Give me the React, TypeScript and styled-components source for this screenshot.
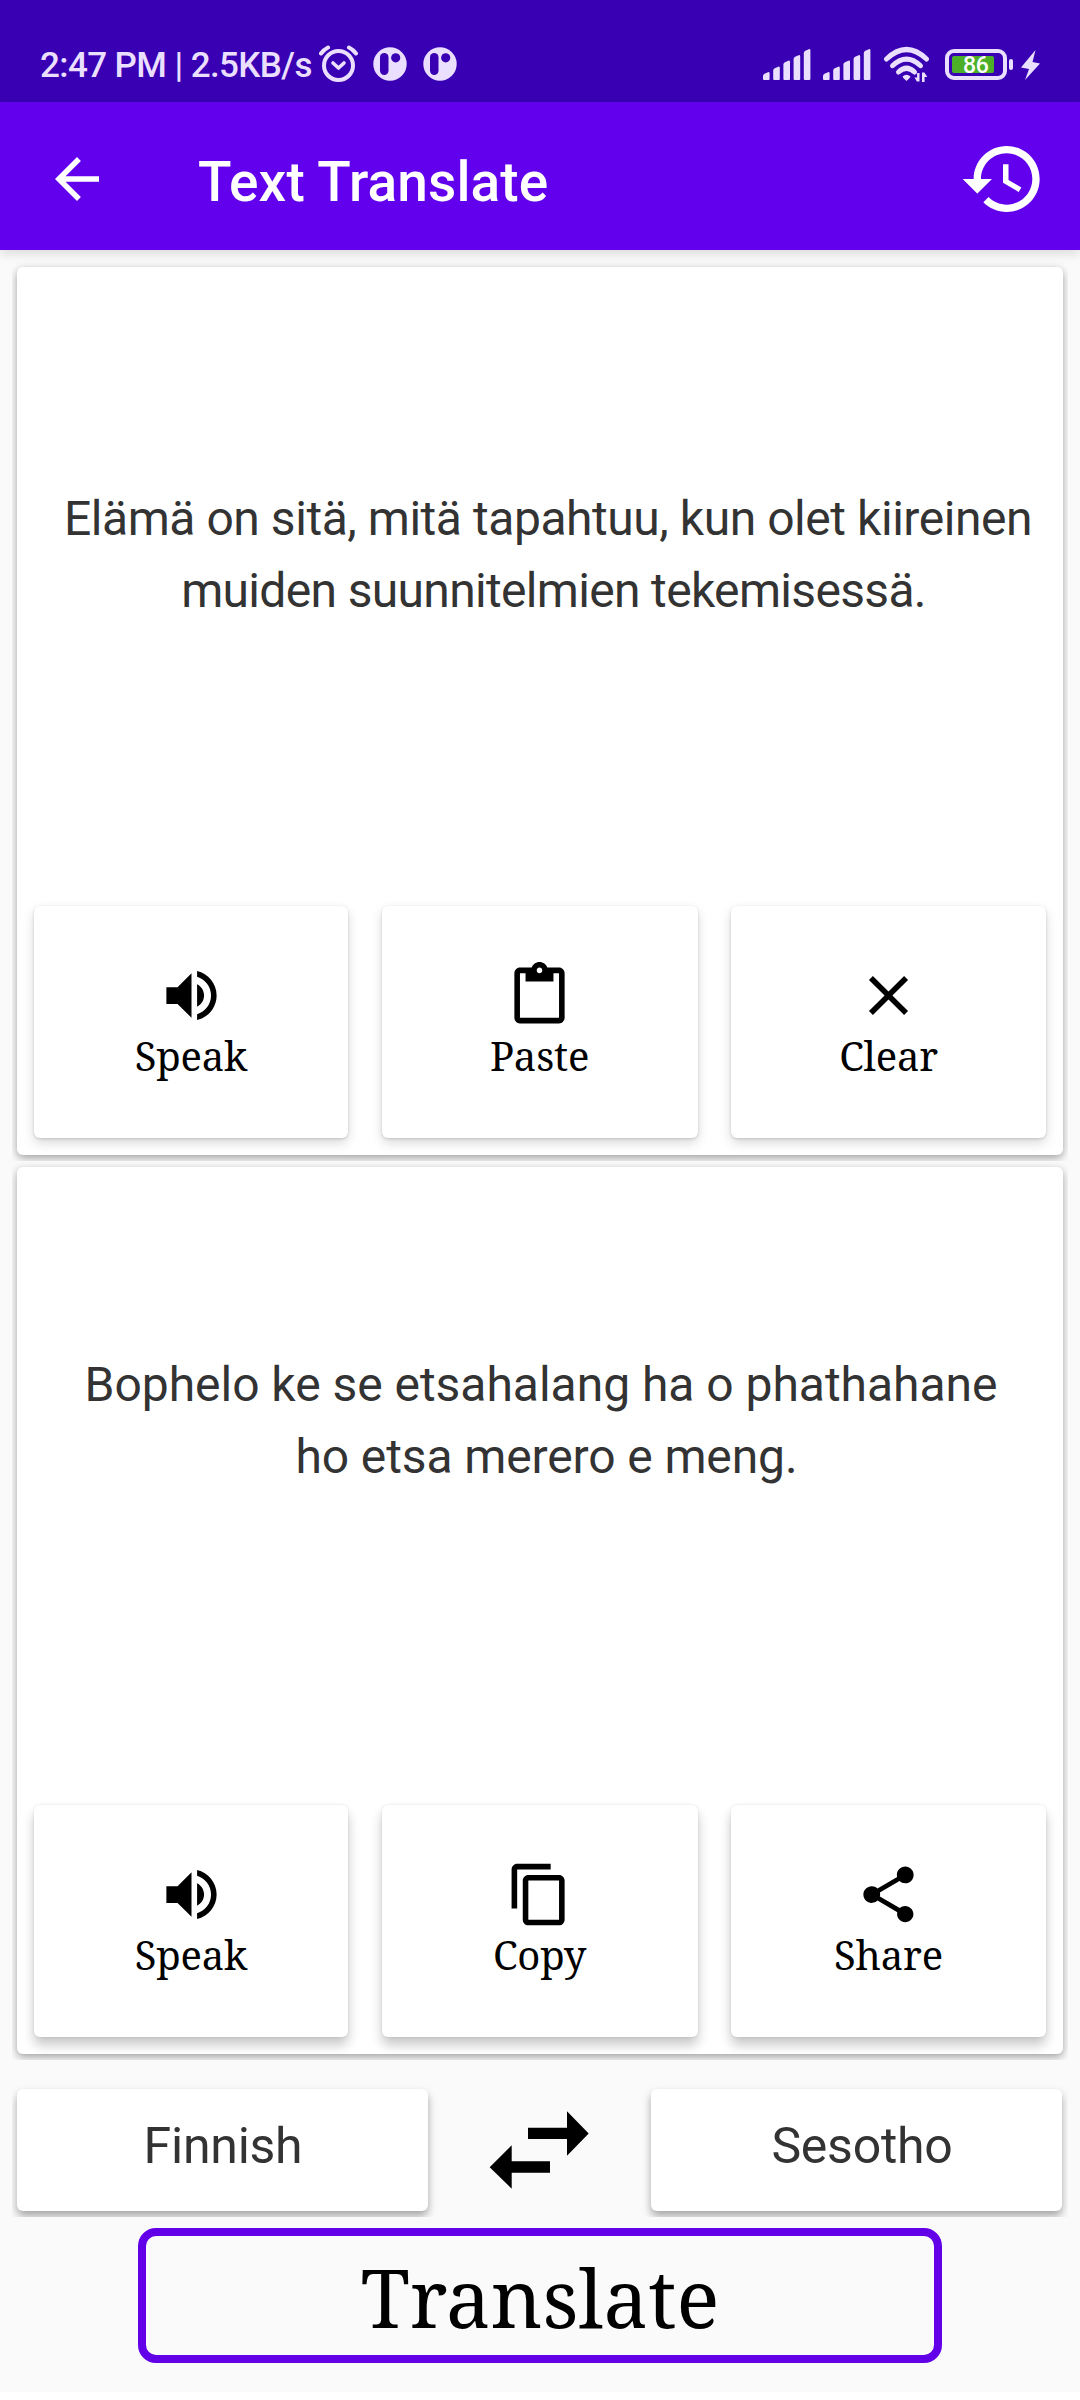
import React from 'react';
import styled, { createGlobalStyle } from 'styled-components';

const GlobalStyle = createGlobalStyle`
  * { box-sizing: border-box; }
  body { margin: 0; background: #ffffff; }
`;

const sans = `Roboto, 'Noto Sans', sans-serif`;
const serif = `'Noto Serif', 'DejaVu Serif Condensed', 'DejaVu Serif', serif`;

const Screen = styled.div`
  width: 1080px;
  height: 2392px;
  background: #fafafa;
  display: flex;
  flex-direction: column;
  font-family: ${sans};
`;

const StatusBar = styled.header`
  height: 102px;
  flex: none;
  background: #3900b3;
  display: flex;
  justify-content: space-between;
  align-items: flex-start;
  padding: 45px 40px 0 40px;
  color: #eadfff;
`;

const StatusGroup = styled.div`
  display: flex;
  height: 40px;
`;

const Clock = styled.div`
  width: 279px;
  padding-top: 1px;
  font-size: 35px;
  line-height: 40px;
  font-weight: 500;
  letter-spacing: -0.6px;
  white-space: nowrap;
`;

const AppBar = styled.div`
  height: 148px;
  flex: none;
  position: relative;
  z-index: 1;
  background: #6200ee;
  color: #fff;
  display: flex;
  align-items: center;
  padding: 6px 33px 0 44px;
  box-shadow: 0 4px 10px rgba(0, 0, 0, 0.12);
`;

const Title = styled.h1`
  flex: 1;
  margin: 0;
  padding: 6px 0 0 88px;
  font-size: 55px;
  line-height: 64px;
  font-weight: 500;
  letter-spacing: 0.1px;
`;

const CardSlot = styled.section<{ $height: number; $top: number; $bottom: number }>`
  flex: none;
  height: ${(p) => p.$height}px;
  margin: 0 12px;
  padding: ${(p) => p.$top}px 5px ${(p) => p.$bottom}px;
  overflow: hidden;
  display: flex;
`;

const Card = styled.div`
  flex: 1;
  background: #fff;
  border-radius: 6px;
  box-shadow: 0 3px 8px rgba(0, 0, 0, 0.36);
  display: flex;
  flex-direction: column;
  justify-content: space-between;
  padding: 0 17px 17px;
`;

const Passage = styled.div<{ $top: number }>`
  padding-top: ${(p) => p.$top}px;
  margin: 0 -17px;
  font-size: 48px;
  line-height: 72px;
  color: #333;
  text-align: center;
  white-space: nowrap;
`;

const Line = styled.div<{ $shift: number; $track: number }>`
  padding-left: ${(p) => p.$shift}px;
  letter-spacing: ${(p) => p.$track}px;
`;

const Actions = styled.div`
  display: grid;
  grid-template-columns: 314px 316px 315px;
  justify-content: space-between;
`;

const Action = styled.button<{ $deep?: boolean }>`
  height: 232px;
  border: 0;
  border-radius: 6px;
  background: #fff;
  color: #000;
  padding: 56px 0 0;
  display: flex;
  flex-direction: column;
  align-items: center;
  justify-content: flex-start;
  gap: 4px;
  box-shadow: ${(p) =>
    p.$deep
      ? '0 8px 12px rgba(0, 0, 0, 0.22), 0 0 3px rgba(0, 0, 0, 0.1)'
      : '0 5px 12px rgba(0, 0, 0, 0.15), 0 1px 3px rgba(0, 0, 0, 0.15)'};
`;

const Label = styled.span`
  font-family: ${serif};
  font-size: 40px;
  line-height: 46px;
  letter-spacing: -0.2px;
`;

const Languages = styled.div`
  flex: none;
  height: 157px;
  margin: 0 12px;
  padding: 29px 6px 6px 5px;
  overflow: hidden;
  display: grid;
  grid-template-columns: 411px 1fr 411px;
  align-items: stretch;
`;

const Language = styled.button<{ $shift: number }>`
  border: 0;
  border-radius: 6px;
  background: #fff;
  color: #333;
  font-family: ${sans};
  font-size: 50px;
  line-height: 60px;
  letter-spacing: -0.25px;
  padding: 0 0 9px ${(p) => p.$shift}px;
  box-shadow: 0 5px 9px rgba(0, 0, 0, 0.34);
`;

const Swap = styled.div`
  display: flex;
  justify-content: center;
  padding: 22px 2px 0 0;
`;

const Translate = styled.button`
  align-self: center;
  width: 804px;
  height: 135px;
  margin-top: 11px;
  border: 8px solid #6200e8;
  border-radius: 18px;
  background: transparent;
  color: #000;
  font-family: ${serif};
  font-size: 80px;
  line-height: 94px;
  padding: 3px 0 0;
`;

function MaterialIcon({ d, size }: { d: string; size: number }) {
  return (
    <svg width={size} height={size} viewBox="0 0 24 24" fill="currentColor">
      <path d={d} />
    </svg>
  );
}

const paths = {
  back: 'M20 11H7.83l5.59-5.59L12 4l-8 8 8 8 1.41-1.41L7.83 13H20v-2z',
  history:
    'M13 3c-4.97 0-9 4.03-9 9H1l3.89 3.89.07.14L9 12H6c0-3.87 3.13-7 7-7s7 3.13 7 7-3.13 7-7 7c-1.93 0-3.68-.79-4.94-2.06l-1.42 1.42C8.27 19.99 10.51 21 13 21c4.97 0 9-4.03 9-9s-4.03-9-9-9zm-1 5v5l4.28 2.54.72-1.21-3.5-2.08V8H12z',
  speak:
    'M3 9v6h4l5 5V4L7 9H3zm13.5 3c0-1.77-1.02-3.29-2.5-4.03v8.05c1.48-.73 2.5-2.25 2.5-4.02zM14 3.23v2.06c2.89.86 5 3.54 5 6.71s-2.11 5.85-5 6.71v2.06c4.01-.91 7-4.49 7-8.77s-2.99-7.86-7-8.77z',
  paste:
    'M19 2h-4.18C14.4.84 13.3 0 12 0c-1.3 0-2.4.84-2.82 2H5c-1.1 0-2 .9-2 2v16c0 1.1.9 2 2 2h14c1.1 0 2-.9 2-2V4c0-1.1-.9-2-2-2zm-7 0c.55 0 1 .45 1 1s-.45 1-1 1-1-.45-1-1 .45-1 1-1zm7 18H5V4h2v3h10V4h2v16z',
  clear:
    'M19 6.41L17.59 5 12 10.59 6.41 5 5 6.41 10.59 12 5 17.59 6.41 19 12 13.41 17.59 19 19 17.59 13.41 12z',
  copy:
    'M16 1H4c-1.1 0-2 .9-2 2v14h2V3h12V1zm3 4H8c-1.1 0-2 .9-2 2v14c0 1.1.9 2 2 2h11c1.1 0 2-.9 2-2V7c0-1.1-.9-2-2-2zm0 16H8V7h11v14z',
  share:
    'M18 16.08c-.76 0-1.44.3-1.96.77L8.91 12.7c.05-.23.09-.46.09-.7s-.04-.47-.09-.7l7.05-4.11c.54.5 1.25.81 2.04.81 1.66 0 3-1.34 3-3s-1.34-3-3-3-3 1.34-3 3c0 .24.04.47.09.7L8.04 9.81C7.5 9.31 6.79 9 6 9c-1.66 0-3 1.34-3 3s1.34 3 3 3c.79 0 1.5-.31 2.04-.81l7.12 4.16c-.05.21-.08.43-.08.65 0 1.61 1.31 2.92 2.92 2.92 1.61 0 2.92-1.31 2.92-2.92s-1.31-2.92-2.92-2.92z',
};

function AlarmIcon() {
  return (
    <svg width="46" height="40" viewBox="0 0 46 40" fill="none" stroke="currentColor" strokeLinecap="round">
      <circle cx="19.5" cy="20.5" r="14.5" strokeWidth="4" />
      <path d="M2 8.5Q5 4.500 9 2.500M37 8.500Q34 4.500 30 2.500" strokeWidth="4" />
      <path d="M14 18l5.500 5 5.500-5" strokeWidth="3.600" strokeLinejoin="round" />
    </svg>
  );
}

function PBadge() {
  return (
    <svg width="50" height="40" viewBox="0 0 50 40">
      <circle cx="25" cy="19" r="16.700" fill="currentColor" />
      <rect x="15" y="8" width="8.500" height="22" rx="4.200" fill="#3900b3" />
      <circle cx="30.700" cy="12.800" r="4.600" fill="#3900b3" />
    </svg>
  );
}

function SignalIcon() {
  const tops = [27, 21.5, 15.5, 10, 4];
  return (
    <svg width="60" height="40" viewBox="0 0 60 40" fill="currentColor">
      {tops.map((t, i) => {
        const x = i * 10.2;
        return (
          <path
            key={t}
            d={`M${x} ${t + 4}Q${x} ${t + 2.5} ${x + 1.5} ${t + 1.8}L${x + 5} ${t + 0.2}Q${x + 6.6} ${t - 0.2} ${x + 6.6} ${t + 1.5}V34Q${x + 6.6} 35 ${x + 5.6} 35H${x + 1}Q${x} 35 ${x} 34Z`}
          />
        );
      })}
    </svg>
  );
}

function WifiIcon() {
  return (
    <svg width="62" height="40" viewBox="0 0 62 40" fill="none" stroke="currentColor" strokeWidth="5">
      <g strokeLinecap="round">
        <path d="M3.500 14Q23.500-5 43.500 14" />
        <path d="M9.500 20.700Q23.500 7.500 37.500 20.700" />
        <path d="M15.500 27Q23.500 19.500 31.500 27" />
      </g>
      <path d="M19.500 31.500Q23.500 28 27.500 31.500Q27 33 23.500 36Q20 33 19.500 31.500Z" fill="currentColor" stroke="none" />
      <path
        d="M36.500 28V36.500h-2.600L31.500 32.500h2.600V28ZM39 37V27.500h2.400l2.900 4.500h-2.700V37Z"
        fill="currentColor"
        stroke="none"
      />
    </svg>
  );
}

const Battery = styled.div`
  width: 62px;
  height: 31px;
  margin-top: 4px;
  border: 4px solid currentColor;
  border-radius: 9px;
  padding: 3px 9px 3px 3px;
`;

const Charge = styled.div`
  height: 17px;
  border-radius: 2px;
  background: #4caf28;
  color: #fff;
  font-size: 23px;
  font-weight: 500;
  line-height: 19px;
  padding-left: 11px;
  letter-spacing: -0.3px;
  white-space: nowrap;
`;

const BatteryTip = styled.div`
  width: 4px;
  height: 11px;
  margin: 14px 8px 0 2px;
  border-radius: 2px;
  background: currentColor;
`;

function BoltIcon() {
  return (
    <svg width="19" height="40" viewBox="0 0 19 40" fill="currentColor">
      <path d="M14.500 5L0 22.500 8 24 4 35 19 18.500 11.500 17Z" />
    </svg>
  );
}

function SwapIcon() {
  return (
    <svg width="100" height="78" viewBox="0 0 100 78" fill="#000">
      <path d="M39 16.700H78V.3L99.700 22.400 78 44.700V28H39z" />
      <path d="M61 50.300H22.700V34.300L.7 56.300 22.700 77.700V61.700H61z" />
    </svg>
  );
}

type IconName = keyof typeof paths;

function ActionButton({ icon, label, deep }: { icon: IconName; label: string; deep?: boolean }) {
  return (
    <Action $deep={deep}>
      <MaterialIcon d={paths[icon]} size={67} />
      <Label>{label}</Label>
    </Action>
  );
}

export default function App() {
  return (
    <>
      <GlobalStyle />
      <Screen>
        <StatusBar>
          <StatusGroup>
            <Clock>2:47 PM | 2.5KB/s</Clock>
            <AlarmIcon />
            <PBadge />
            <PBadge />
          </StatusGroup>
          <StatusGroup>
            <SignalIcon />
            <SignalIcon />
            <WifiIcon />
            <Battery>
              <Charge>86</Charge>
            </Battery>
            <BatteryTip />
            <BoltIcon />
          </StatusGroup>
        </StatusBar>
        <AppBar>
          <MaterialIcon d={paths.back} size={66} />
          <Title>Text Translate</Title>
          <MaterialIcon d={paths.history} size={88} />
        </AppBar>

        <CardSlot $height={911} $top={17} $bottom={6}>
          <Card>
            <Passage $top={216}>
              <Line $shift={16} $track={-0.45}>Elämä on sitä, mitä tapahtuu, kun olet kiireinen</Line>
              <Line $shift={27} $track={-0.67}>muiden suunnitelmien tekemisessä.</Line>
            </Passage>
            <Actions>
              <ActionButton icon="speak" label="Speak" />
              <ActionButton icon="paste" label="Paste" />
              <ActionButton icon="clear" label="Clear" />
            </Actions>
          </Card>
        </CardSlot>

        <CardSlot $height={899} $top={6} $bottom={6}>
          <Card>
            <Passage $top={182}>
              <Line $shift={2} $track={-0.03}>Bophelo ke se etsahalang ha o phathahane</Line>
              <Line $shift={13} $track={-0.12}>ho etsa merero e meng.</Line>
            </Passage>
            <Actions>
              <ActionButton icon="speak" label="Speak" deep />
              <ActionButton icon="copy" label="Copy" deep />
              <ActionButton icon="share" label="Share" deep />
            </Actions>
          </Card>
        </CardSlot>

        <Languages>
          <Language $shift={1}>Finnish</Language>
          <Swap>
            <SwapIcon />
          </Swap>
          <Language $shift={11}>Sesotho</Language>
        </Languages>
        <Translate>Translate</Translate>
      </Screen>
    </>
  );
}
